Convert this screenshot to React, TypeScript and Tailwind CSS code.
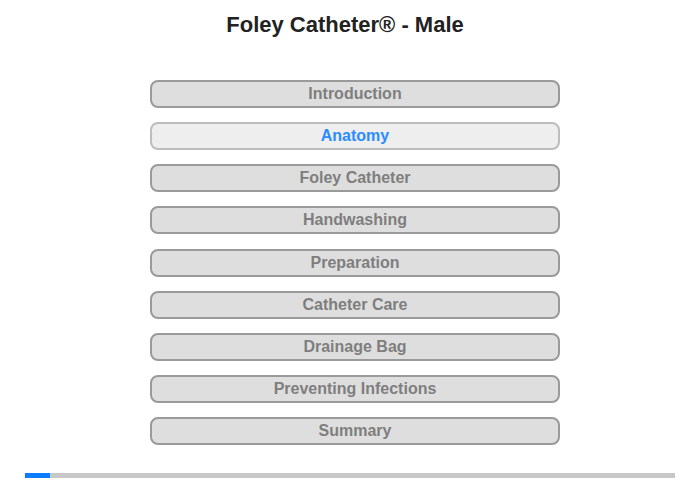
import React from "react";

const items = [
  "Introduction",
  "Anatomy",
  "Foley Catheter",
  "Handwashing",
  "Preparation",
  "Catheter Care",
  "Drainage Bag",
  "Preventing Infections",
  "Summary",
];

export default function App() {
  return (
    <div className="w-[700px] h-[480px] bg-white overflow-hidden" style={{ fontFamily: '"Liberation Sans", Arial, sans-serif' }}>
      <h1 className="pt-[10px] pr-[10px] text-center text-[22px] leading-[30px] font-bold text-[#222222]">Foley Catheter® - Male</h1>
      <div className="mt-[40px] ml-[150px] w-[410px] flex flex-col gap-[14.125px]">
        {items.map((t) => {
          const active = t === "Anatomy";
          return (
            <div
              key={t}
              className={
                active
                  ? "w-[410px] h-[28px] rounded-[8px] border-2 border-[#bdbdbd] bg-[#eeeeee] flex items-center justify-center text-[16px] font-bold text-[#2a8cff]"
                  : "w-[410px] h-[28px] rounded-[8px] border-2 border-[#9a9a9a] bg-[#dedede] flex items-center justify-center text-[16px] font-bold text-[#7e7e7e]"
              }
            >
              {t}
            </div>
          );
        })}
      </div>
      <div className="mt-[28px] mx-[25px] h-[5px] bg-[#c8c8c8] flex">
        <div className="w-[25px] h-full bg-[#0a7cff]" />
      </div>
    </div>
  );
}
